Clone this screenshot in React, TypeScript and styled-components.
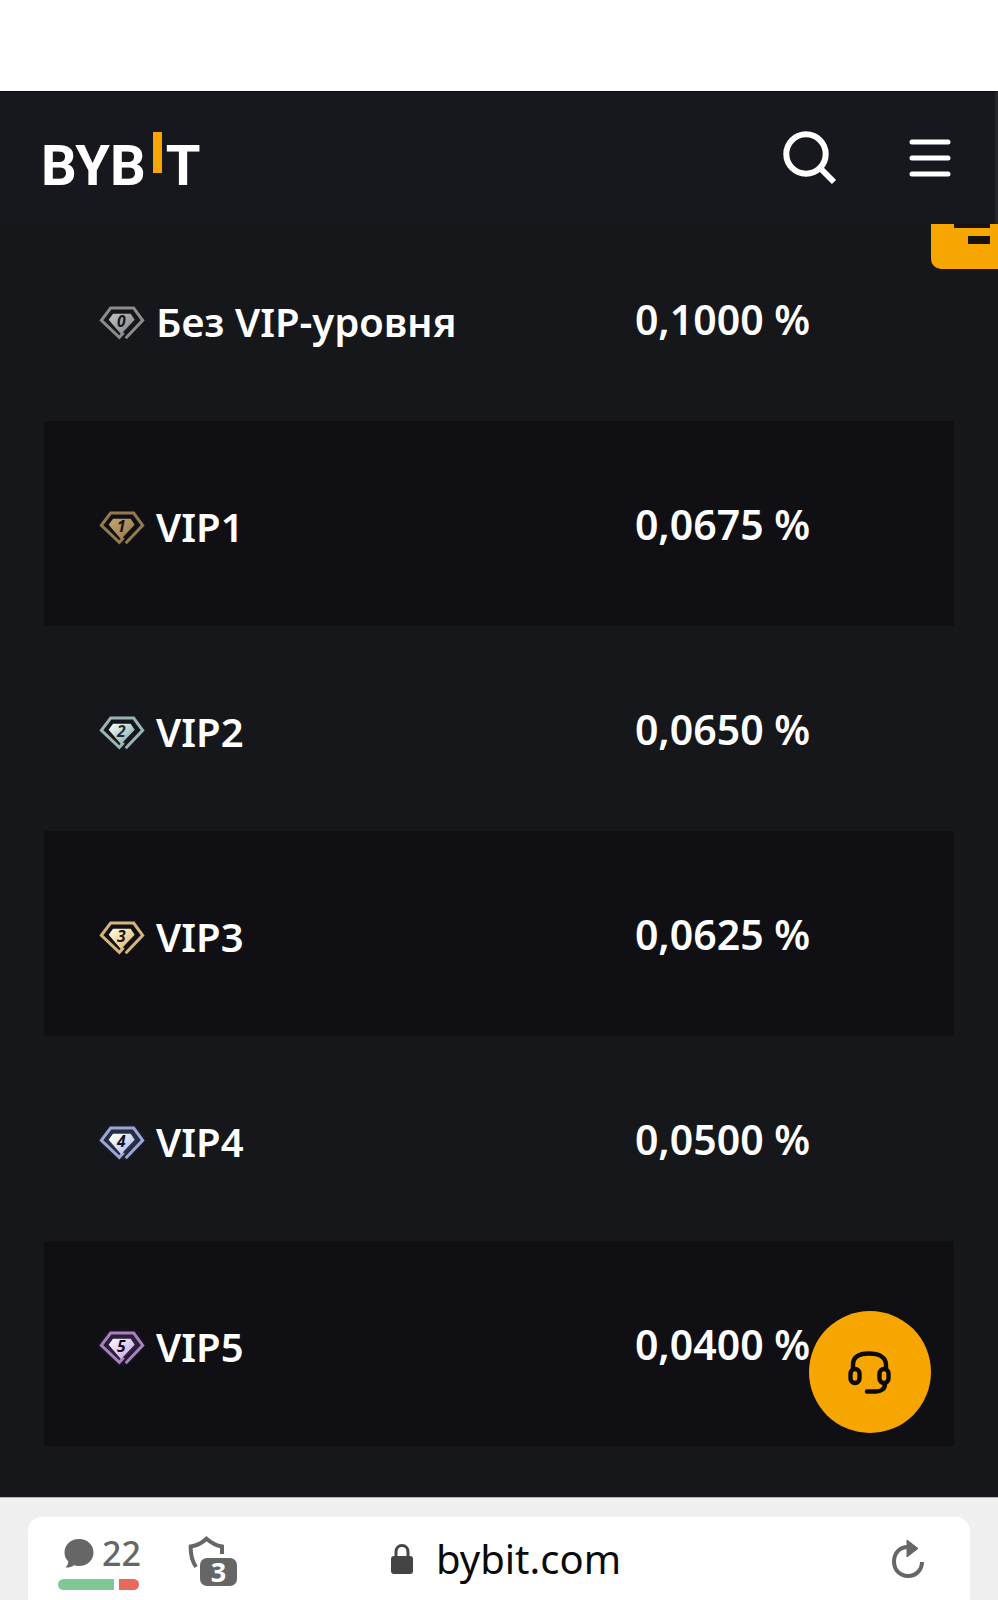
import React from "react";
import styled, { createGlobalStyle } from "styled-components";

const GlobalStyle = createGlobalStyle`
  *, *::before, *::after { box-sizing: border-box; }
  body {
    margin: 0;
    background: #ffffff;
    font-family: "Noto Sans", "Open Sans", sans-serif;
  }
  button { border: 0; padding: 0; background: none; cursor: pointer; }
  svg { display: block; flex: none; }
`;

const Page = styled.div`
  display: flex;
  flex-direction: column;
  min-height: 100vh;
  padding-top: 91px;
`;

const Header = styled.header`
  position: relative;
  z-index: 1;
  display: flex;
  align-items: center;
  justify-content: space-between;
  height: 133px;
  padding: 0 44px 0 41px;
  background: #17181e;
  border-top: 1px solid #0c0d11;
  border-right: 3px solid #26272c;
`;

const Logo = styled.a`
  display: flex;
  align-items: center;
  padding-top: 15px;
  color: #ffffff;
  font-family: Roboto, "Liberation Sans", sans-serif;
  font-size: 56px;
  font-weight: 700;
  line-height: 64px;
  text-decoration: none;
`;

const LogoBar = styled.span`
  width: 9px;
  height: 41px;
  margin: 0 4px 26px 7px;
  background: #f7a600;
`;

const HeaderActions = styled.div`
  display: flex;
  align-items: center;
  gap: 72px;
`;

const IconButton = styled.button`
  display: flex;
  color: inherit;
`;

const Main = styled.main`
  position: relative;
  flex: 1;
  padding: 0 44px 50px;
  background: #16171b;
`;

const SideTab = styled.button`
  position: absolute;
  top: 0;
  right: 0;
  width: 67px;
  height: 45px;
  border-radius: 0 0 0 10px;
  overflow: hidden;
  background: #f7a600;
`;

const SupportButton = styled.button`
  position: absolute;
  right: 67px;
  bottom: 64px;
  display: flex;
  align-items: center;
  justify-content: center;
  width: 122px;
  height: 122px;
  border-radius: 50%;
  background: #f7a600;
`;

const RateTable = styled.table`
  width: 100%;
  margin-top: -8px;
  border-collapse: collapse;
  table-layout: fixed;
  color: #ffffff;
  font-size: 40px;
  line-height: 56px;
`;

const RateRow = styled.tr`
  height: 205px;
  &:nth-child(even) { background: #101014; }
`;

const LevelCell = styled.th`
  width: 59%;
  padding: 0 0 0 55px;
  text-align: left;
  font-weight: 600;
`;

const Level = styled.div`
  display: flex;
  align-items: center;
  gap: 11px;
  padding-top: 6px;

  svg { margin-top: 2px; }
`;

const RateCell = styled.td`
  padding: 0 0 0 54px;
  font-size: 41px;
  font-weight: 600;
`;

const BrowserBar = styled.footer`
  height: 103px;
  padding: 19px 28px 0;
  border-top: 1px solid #b5b5bb;
  background: #efeff0;
`;

const AddressBar = styled.div`
  display: grid;
  grid-template-columns: 1fr auto 1fr;
  align-items: center;
  height: 83px;
  border-radius: 14px 14px 0 0;
  background: #ffffff;
`;

const Tools = styled.div`
  display: flex;
  align-items: center;
  gap: 49px;
  padding-left: 30px;
  color: #666666;
`;

const Comments = styled.button`
  display: flex;
  flex-direction: column;
  gap: 8px;
  width: 81px;
  padding-top: 8px;
  color: inherit;
  font: 500 34px/36px "Noto Sans", sans-serif;
`;

const CommentCount = styled.span`
  display: flex;
  align-items: center;
  gap: 8px;
  padding-left: 6px;
`;

const Sentiment = styled.span`
  display: flex;
  gap: 5px;
  width: 100%;
  height: 11px;
  border-radius: 6px;
  overflow: hidden;
`;

const Share = styled.span<{ $grow: number; $color: string }>`
  flex: ${(p) => p.$grow};
  background: ${(p) => p.$color};
`;

const Protect = styled.button`
  position: relative;
  display: flex;
  align-items: flex-start;
  width: 49px;
  height: 50px;
  margin-top: 4px;
  color: inherit;
`;

const Badge = styled.span`
  position: absolute;
  right: 0;
  bottom: 0;
  width: 37px;
  height: 28px;
  border-radius: 7px;
  background: #666666;
  color: #ffffff;
  font: 700 27px/28px "Noto Sans", sans-serif;
`;

const Address = styled.a`
  display: flex;
  align-items: center;
  gap: 23px;
  padding-left: 14px;
  color: #0a0a0a;
  font-size: 40px;
  line-height: 56px;
  text-decoration: none;
`;

const Reload = styled(IconButton)`
  justify-self: end;
  margin-right: 45px;
  color: #666666;
`;

type Gem = { line: string; light: string; fill: string; digit: string; glow?: string };

const levels: { name: string; rate: string; gem: Gem }[] = [
  { name: "Без VIP-уровня", rate: "0,1000 %", gem: { line: "#8b8b8d", light: "#b9b9b9", fill: "#8e8e90", digit: "#17181c" } },
  { name: "VIP1", rate: "0,0675 %", gem: { line: "#92794f", light: "#bd9f6d", fill: "#9c8050", digit: "#16120e" } },
  { name: "VIP2", rate: "0,0650 %", gem: { line: "#9ab4b3", light: "#e9f5f3", fill: "#91b3af", digit: "#1d2b2d" } },
  { name: "VIP3", rate: "0,0625 %", gem: { line: "#d4b47e", light: "#fff3d5", fill: "#dfbd80", digit: "#18130d" } },
  { name: "VIP4", rate: "0,0500 %", gem: { line: "#9ba6d6", light: "#ffffff", fill: "#b2c1f0", digit: "#101320", glow: "#5368a8" } },
  { name: "VIP5", rate: "0,0400 %", gem: { line: "#a681bc", light: "#f6ecff", fill: "#cbafe4", digit: "#140d1b", glow: "#704394" } },
];

function GemIcon({ gem, level }: { gem: Gem; level: number }) {
  const id = `gem-${level}`;
  return (
    <svg width="46" height="34" viewBox="0 0 138 102" overflow="visible" aria-hidden="true">
      <defs>
        <linearGradient id={id} x1="0" y1="0" x2="1" y2="1">
          <stop offset="0.15" stopColor={gem.light} />
          <stop offset="0.8" stopColor={gem.fill} />
        </linearGradient>
        <filter id={`${id}-glow`} x="-30%" y="-30%" width="160%" height="160%">
          <feGaussianBlur stdDeviation="9" />
        </filter>
      </defs>
      {gem.glow && (
        <path d="M35 6H104L131 43L70 97L7 43Z" fill={gem.glow} opacity="0.35" filter={`url(#${id}-glow)`} />
      )}
      <path d="M80 97L131 43L104 6H35L7 43L61 94L74 80" fill="none" stroke={gem.line} strokeWidth="9" />
      <path d="M42 23H95L107 41L66 85L29 41Z" fill={`url(#${id})`} />
      <text x="67" y="64" textAnchor="middle" fontFamily="Noto Sans, sans-serif" fontSize="47" fontWeight="700" fontStyle="italic" fill={gem.digit}>
        {level}
      </text>
    </svg>
  );
}

export default function App() {
  return (
    <>
      <GlobalStyle />
      <Page>
        <Header>
          <Logo href="#" aria-label="Bybit">
            BYB<LogoBar />T
          </Logo>
          <HeaderActions>
            <IconButton aria-label="Поиск">
              <svg width="54" height="54" viewBox="0 0 54 54" fill="none" stroke="#fff" strokeWidth="6">
                <circle cx="23" cy="23" r="19.7" />
                <path d="M37 37L51 51" />
              </svg>
            </IconButton>
            <IconButton aria-label="Меню">
              <svg width="42" height="38" viewBox="0 0 42 38" fill="none" stroke="#fff" strokeWidth="5" strokeLinecap="round">
                <path d="M3 3H39M3 19H39M3 35H39" />
              </svg>
            </IconButton>
          </HeaderActions>
        </Header>
        <Main>
          <RateTable>
            <tbody>
              {levels.map((item, level) => (
                <RateRow key={item.name}>
                  <LevelCell scope="row">
                    <Level>
                      <GemIcon gem={item.gem} level={level} />
                      {item.name}
                    </Level>
                  </LevelCell>
                  <RateCell>{item.rate}</RateCell>
                </RateRow>
              ))}
            </tbody>
          </RateTable>
          <SideTab aria-label="Задания">
            <svg width="67" height="45" viewBox="0 0 67 45" fill="#17120c">
              <path d="M23 0H59V4H23ZM37 12H59V20H37Z" />
            </svg>
          </SideTab>
          <SupportButton aria-label="Поддержка">
            <svg width="44" height="44" viewBox="0 0 44 44" fill="none" stroke="#0b0a08" strokeWidth="4.4" strokeLinecap="round">
              <path d="M5 19V15C5 7 11 3.500 21 3.500S38 7 38 15V19" />
              <rect x="2.500" y="19" width="9" height="14" rx="4.500" />
              <rect x="31.500" y="19" width="9" height="14" rx="4.500" />
              <path d="M37 34C37 39 33 41.500 28 41.500H19" />
            </svg>
          </SupportButton>
        </Main>
        <BrowserBar>
          <AddressBar>
            <Tools>
              <Comments aria-label="Отзывы: 22">
                <CommentCount>
                  <svg width="30" height="29" viewBox="0 0 30 29" fill="currentColor">
                    <path d="M15 0C23.5 0 29.5 6 29.5 13.500S23.500 27 15 27C13 27 11.500 26.700 10 26.200C7.500 28 4.500 28.800 1.500 28.500C3.500 26.500 4.300 24.500 4.400 22.500C1.700 20 .500 17 .500 13.500C.500 6 6.500 0 15 0Z" />
                  </svg>
                  22
                </CommentCount>
                <Sentiment>
                  <Share $grow={56} $color="#80c795" />
                  <Share $grow={20} $color="#e66a5c" />
                </Sentiment>
              </Comments>
              <Protect aria-label="Защита: 3">
                <svg width="38" height="34" viewBox="0 0 38 34" fill="none" stroke="currentColor" strokeWidth="4">
                  <path d="M34 18V10.500C28 9.500 24 7.500 18.500 2.700C13.500 7.500 9 9.500 2.700 10.500C2.500 18 3.500 24 8 31" />
                </svg>
                <Badge>3</Badge>
              </Protect>
            </Tools>
            <Address href="#">
              <svg width="22" height="30" viewBox="0 0 22 30">
                <path d="M5 14V8C5 4 7.500 1.500 11 1.500S17 4 17 8V14" fill="none" stroke="#444" strokeWidth="3" />
                <rect y="12" width="22" height="18" rx="3" fill="#444" />
              </svg>
              bybit.com
            </Address>
            <Reload aria-label="Обновить">
              <svg width="34" height="40" viewBox="0 0 34 40">
                <path d="M17 8C8 8 3 15 3 22.500C3 31 9 37 17 37S31 31 31 23" fill="none" stroke="currentColor" strokeWidth="4" />
                <path d="M16 1L27 9.500L16 18Z" fill="currentColor" stroke="currentColor" strokeLinejoin="round" />
              </svg>
            </Reload>
          </AddressBar>
        </BrowserBar>
      </Page>
    </>
  );
}
